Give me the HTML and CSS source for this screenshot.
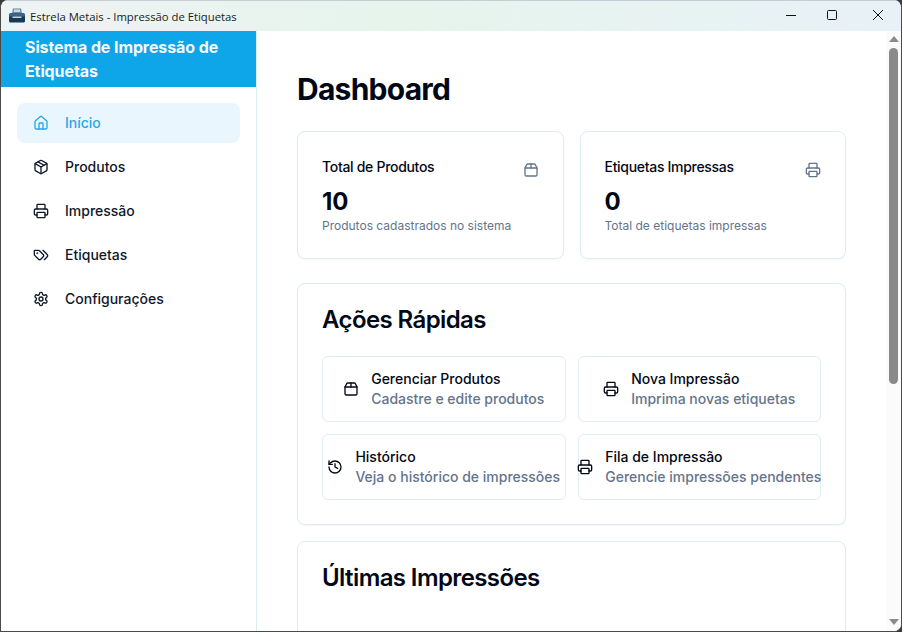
FILE: index.html
```html
<!DOCTYPE html>
<html lang="pt-BR">
  <head>
    <meta charset="UTF-8" />
    <title>Estrela Metais - Impressão de Etiquetas</title>
    <link rel="stylesheet" href="styles.css">
  </head>
  <body>
    <!-- Icon set -->
    <svg class="icon-defs" xmlns="http://www.w3.org/2000/svg">
      <symbol id="i-home" viewBox="0 0 24 24">
        <path d="M15 21v-8a1 1 0 0 0-1-1h-4a1 1 0 0 0-1 1v8" />
        <path d="M3 10a2 2 0 0 1 .709-1.528l7-5.999a2 2 0 0 1 2.582 0l7 5.999A2 2 0 0 1 21 10v9a2 2 0 0 1-2 2H5a2 2 0 0 1-2-2z" />
      </symbol>
      <symbol id="i-package" viewBox="0 0 24 24">
        <path d="m7.5 4.27 9 5.15" />
        <path d="M21 8a2 2 0 0 0-1-1.73l-7-4a2 2 0 0 0-2 0l-7 4A2 2 0 0 0 3 8v8a2 2 0 0 0 1 1.73l7 4a2 2 0 0 0 2 0l7-4A2 2 0 0 0 21 16Z" />
        <path d="m3.3 7 8.7 5 8.7-5" />
        <path d="M12 22V12" />
      </symbol>
      <symbol id="i-package-2" viewBox="0 0 24 24">
        <path d="M3 9h18v10a2 2 0 0 1-2 2H5a2 2 0 0 1-2-2V9Z" />
        <path d="m3 9 2.45-4.9A2 2 0 0 1 7.24 3h9.52a2 2 0 0 1 1.8 1.1L21 9" />
        <path d="M12 3v6" />
      </symbol>
      <symbol id="i-printer" viewBox="0 0 24 24">
        <path d="M6 18H4a2 2 0 0 1-2-2v-5a2 2 0 0 1 2-2h16a2 2 0 0 1 2 2v5a2 2 0 0 1-2 2h-2" />
        <path d="M6 9V3a1 1 0 0 1 1-1h10a1 1 0 0 1 1 1v6" />
        <rect x="6" y="14" width="12" height="8" rx="1" />
      </symbol>
      <symbol id="i-tags" viewBox="0 0 24 24">
        <path d="m15 5 6.3 6.3a2.4 2.4 0 0 1 0 3.4L17 19" />
        <path d="M9.586 5.586A2 2 0 0 0 8.172 5H3a1 1 0 0 0-1 1v5.172a2 2 0 0 0 .586 1.414L8.29 18.29a2.426 2.426 0 0 0 3.42 0l3.58-3.58a2.426 2.426 0 0 0 0-3.42z" />
        <circle cx="6.5" cy="9.5" r=".5" />
      </symbol>
      <symbol id="i-settings" viewBox="0 0 24 24">
        <path d="M12.22 2h-.44a2 2 0 0 0-2 2v.18a2 2 0 0 1-1 1.73l-.43.25a2 2 0 0 1-2 0l-.15-.08a2 2 0 0 0-2.73.73l-.22.38a2 2 0 0 0 .73 2.73l.15.1a2 2 0 0 1 1 1.72v.51a2 2 0 0 1-1 1.74l-.15.09a2 2 0 0 0-.73 2.73l.22.38a2 2 0 0 0 2.73.73l.15-.08a2 2 0 0 1 2 0l.43.25a2 2 0 0 1 1 1.73V20a2 2 0 0 0 2 2h.44a2 2 0 0 0 2-2v-.18a2 2 0 0 1 1-1.73l.43-.25a2 2 0 0 1 2 0l.15.08a2 2 0 0 0 2.73-.73l.22-.39a2 2 0 0 0-.73-2.73l-.15-.08a2 2 0 0 1-1-1.74v-.5a2 2 0 0 1 1-1.74l.15-.09a2 2 0 0 0 .73-2.73l-.22-.38a2 2 0 0 0-2.73-.73l-.15.08a2 2 0 0 1-2 0l-.43-.25a2 2 0 0 1-1-1.73V4a2 2 0 0 0-2-2z" />
        <circle cx="12" cy="12" r="3" />
      </symbol>
      <symbol id="i-history" viewBox="0 0 24 24">
        <path d="M3 12a9 9 0 1 0 9-9 9.75 9.75 0 0 0-6.74 2.74L3 8" />
        <path d="M3 3v5h5" />
        <path d="M12 7v5l4 2" />
      </symbol>
    </svg>

    <div class="window">
      <!-- Title bar -->
      <header class="titlebar">
        <svg class="app-icon" viewBox="0 0 18 16" xmlns="http://www.w3.org/2000/svg">
          <path d="M5 0.500h8l1 4.500H4z" fill="#6f8797" />
          <path d="M6 1.500h6l.4 2.500H5.600z" fill="#cfdbe2" />
          <path d="M1 6.500Q1 5 2.500 5h13Q17 5 17 6.500V9H1z" fill="#3a6484" />
          <path d="M1 8.500h16V13q0 1.500-1.500 1.500h-13Q1 14.500 1 13z" fill="#173a55" />
          <path d="M4.500 8.500h9v1.500h-9z" fill="#c8d5dd" />
        </svg>
        <span class="window-title">Estrela Metais - Impressão de Etiquetas</span>
        <div class="window-controls">
          <svg class="ctl" viewBox="0 0 46 30" xmlns="http://www.w3.org/2000/svg"><path d="M23 14.500h10" /></svg>
          <svg class="ctl" viewBox="0 0 46 30" xmlns="http://www.w3.org/2000/svg"><rect x="18.500" y="9.500" width="9" height="9" rx="1" /></svg>
          <svg class="ctl" viewBox="0 0 46 30" xmlns="http://www.w3.org/2000/svg"><path d="M18 9l10 10M28 9L18 19" /></svg>
        </div>
      </header>

      <div class="app">
        <!-- Sidebar -->
        <aside class="sidebar">
          <div class="brand">Sistema de Impressão de Etiquetas</div>
          <nav class="nav">
            <a class="nav-item active"><svg class="icon"><use href="#i-home" /></svg>Início</a>
            <a class="nav-item"><svg class="icon"><use href="#i-package" /></svg>Produtos</a>
            <a class="nav-item"><svg class="icon"><use href="#i-printer" /></svg>Impressão</a>
            <a class="nav-item"><svg class="icon"><use href="#i-tags" /></svg>Etiquetas</a>
            <a class="nav-item"><svg class="icon"><use href="#i-settings" /></svg>Configurações</a>
          </nav>
        </aside>

        <!-- Main content -->
        <main class="main">
          <h1 class="page-title">Dashboard</h1>

          <div class="stats">
            <section class="card stat">
              <div class="stat-head">
                <span class="stat-label">Total de Produtos</span>
                <svg class="icon stat-icon"><use href="#i-package-2" /></svg>
              </div>
              <div class="stat-value">10</div>
              <div class="stat-note">Produtos cadastrados no sistema</div>
            </section>
            <section class="card stat">
              <div class="stat-head">
                <span class="stat-label">Etiquetas Impressas</span>
                <svg class="icon stat-icon"><use href="#i-printer" /></svg>
              </div>
              <div class="stat-value">0</div>
              <div class="stat-note">Total de etiquetas impressas</div>
            </section>
          </div>

          <section class="card panel">
            <h2 class="panel-title">Ações Rápidas</h2>
            <div class="actions">
              <button class="action">
                <svg class="icon"><use href="#i-package-2" /></svg>
                <span class="action-text"><b>Gerenciar Produtos</b><small>Cadastre e edite produtos</small></span>
              </button>
              <button class="action">
                <svg class="icon"><use href="#i-printer" /></svg>
                <span class="action-text"><b>Nova Impressão</b><small>Imprima novas etiquetas</small></span>
              </button>
              <button class="action">
                <svg class="icon"><use href="#i-history" /></svg>
                <span class="action-text"><b>Histórico</b><small>Veja o histórico de impressões</small></span>
              </button>
              <button class="action">
                <svg class="icon"><use href="#i-printer" /></svg>
                <span class="action-text"><b>Fila de Impressão</b><small>Gerencie impressões pendentes</small></span>
              </button>
            </div>
          </section>

          <section class="card panel panel-last">
            <h2 class="panel-title">Últimas Impressões</h2>
          </section>
        </main>

        <!-- Scrollbar -->
        <div class="scrollbar">
          <span class="arrow arrow-up"></span>
          <span class="thumb"></span>
          <span class="arrow arrow-down"></span>
        </div>
      </div>
    </div>
  </body>
</html>
```

FILE: styles.css
```css
* {
  box-sizing: border-box;
}
html,
body {
  height: 100%;
}
body {
  margin: 0;
  overflow: hidden;
  font-family: Inter, "Liberation Sans", sans-serif;
  color: #020817;
  background-color: #3a3a3a;
}
.icon-defs {
  display: none;
}
.window {
  display: flex;
  flex-direction: column;
  height: 632px;
  overflow: hidden;
  background: white;
  border-left: 1px solid #4a4a4a;
  border-right: 1px solid #4a4a4a;
  border-bottom: 1px solid #4a4a4a;
  border-radius: 8px 8px 8px 0;
}

/* Title bar */
.titlebar {
  display: flex;
  align-items: center;
  flex: none;
  height: 31px;
  padding-left: 7px;
  background: linear-gradient(90deg, #eef3f3 0%, #e6f4ec 45%, #e8f1f7 100%);
  border-top: 1px solid #c4ced4;
}
.app-icon {
  width: 18px;
  height: 16px;
}
.window-title {
  margin-left: 4px;
  font-family: "Open Sans", sans-serif;
  font-size: 11.3px;
  color: #1a1a1a;
}
.window-controls {
  display: flex;
  margin-left: auto;
}
.ctl {
  width: 46px;
  height: 30px;
  fill: none;
  stroke: #111;
  stroke-width: 1;
}

/* Sidebar */
.app {
  display: flex;
  flex: 1;
  min-height: 0;
}
.sidebar {
  flex: none;
  width: 256px;
  border-right: 1px solid #dcedf3;
}
.brand {
  height: 56px;
  padding: 4px 24px 0;
  font-size: 16px;
  font-weight: 700;
  line-height: 24px;
  letter-spacing: -0.1px;
  color: #f2faff;
  background-color: #0ea5e9;
}
.nav {
  display: flex;
  flex-direction: column;
  gap: 4px;
  padding: 16px;
}
.nav-item {
  display: flex;
  align-items: center;
  gap: 16px;
  height: 40px;
  padding: 0 16px;
  border-radius: 8px;
  font-size: 14px;
  font-weight: 500;
  line-height: 20px;
  color: #0f172a;
}
.nav-item.active {
  color: #2ba6e6;
  background-color: #eaf6fd;
}
.icon {
  flex: none;
  width: 16px;
  height: 16px;
  fill: none;
  stroke: currentColor;
  stroke-width: 2;
  stroke-linecap: round;
  stroke-linejoin: round;
}

/* Main */
.main {
  flex: 1;
  min-width: 0;
  padding: 40px 40px 0;
  overflow: hidden;
}
.page-title {
  margin: 0 0 24px;
  font-size: 30px;
  font-weight: 700;
  line-height: 36px;
  letter-spacing: -0.75px;
}
.card {
  background: white;
  border: 1px solid #dcedf3;
  border-radius: 8px;
  box-shadow: 0 1px 2px rgba(0, 0, 0, 0.04);
}
.stats {
  display: grid;
  grid-template-columns: 1fr 1fr;
  gap: 16px;
  margin-bottom: 24px;
}
.stat {
  padding: 24px;
}
.stat-head {
  display: flex;
  justify-content: space-between;
  align-items: center;
  padding-bottom: 8px;
}
.stat-label {
  font-size: 14px;
  font-weight: 500;
  line-height: 20px;
  letter-spacing: -0.3px;
}
.stat-icon {
  margin-top: 6px;
  color: #64748b;
}
.stat-value {
  font-size: 24px;
  font-weight: 700;
  line-height: 32px;
}
.stat-note {
  font-size: 12px;
  line-height: 16px;
  color: #64748b;
}
.panel {
  padding: 24px;
  margin-bottom: 16px;
}
.panel-title {
  margin: 0 0 24px;
  font-size: 24px;
  font-weight: 600;
  line-height: 24px;
  letter-spacing: -0.6px;
}
.panel-last {
  height: 240px;
}
.actions {
  display: grid;
  grid-template-columns: minmax(0, 1fr) minmax(0, 1fr);
  gap: 12px;
}
.action {
  display: flex;
  justify-content: center;
  align-items: center;
  gap: 12px;
  height: 66px;
  padding: 0 16px;
  font-family: inherit;
  color: #020817;
  text-align: left;
  white-space: nowrap;
  background: white;
  border: 1px solid #dcedf3;
  border-radius: 6px;
}
.action-text {
  display: flex;
  flex-direction: column;
  font-size: 14px;
  font-weight: 500;
  line-height: 20px;
}
.action-text b {
  font-weight: 500;
}
.action-text small {
  font-size: 14px;
  color: #64748b;
}

/* Scrollbar */
.scrollbar {
  display: flex;
  flex: none;
  flex-direction: column;
  align-items: center;
  width: 15px;
  padding: 5px 0 6px;
  background-color: #fbfbfb;
}
.thumb {
  width: 9px;
  height: 336px;
  margin-top: 6px;
  border-radius: 5px;
  background-color: #8a8a8a;
}
.arrow {
  width: 0;
  height: 0;
  border-left: 5px solid transparent;
  border-right: 5px solid transparent;
}
.arrow-up {
  border-bottom: 6px solid #8a8a8a;
}
.arrow-down {
  margin-top: auto;
  border-top: 6px solid #8a8a8a;
}
```
